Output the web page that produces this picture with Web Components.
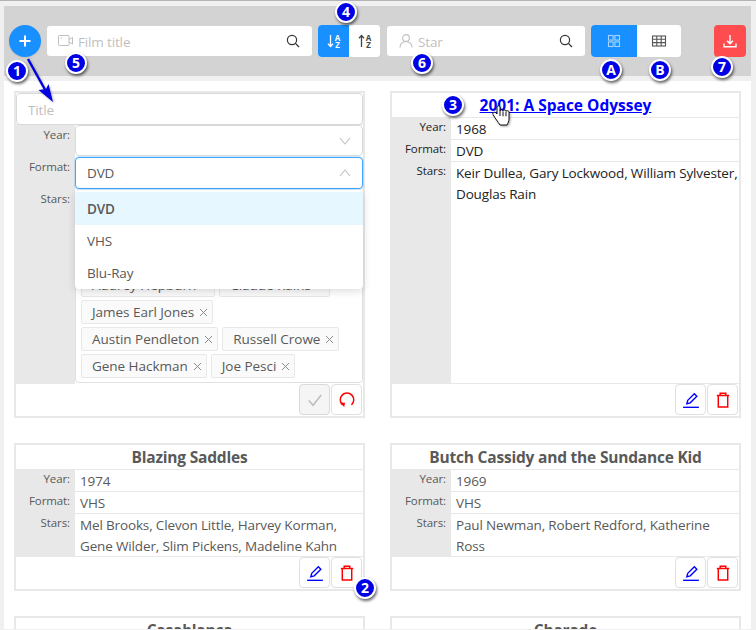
<!DOCTYPE html>
<html lang="en">
<head>
<meta charset="utf-8">
<title>Films</title>
<style>
html,body{margin:0;padding:0;height:630px;overflow:hidden;background:#f0f0f0;font:13.5px/21px "Open Sans","Noto Sans",sans-serif;letter-spacing:-.15px;color:#595959}
</style>
</head>
<body>
<film-app>
  <film-toolbar slot="toolbar">
    <round-add></round-add>
    <search-box style="width:265px" placeholder="Film title" icon="video"></search-box>
    <seg-group style="width:62px">
      <seg-btn active><sort-glyph dir="down"></sort-glyph></seg-btn>
      <seg-btn><sort-glyph dir="up"></sort-glyph></seg-btn>
    </seg-group>
    <search-box style="width:198px;margin-left:1px" placeholder="Star" icon="user"></search-box>
    <seg-group style="width:90px">
      <seg-btn active wide><ui-icon name="grid" style="color:#a5d4ff"></ui-icon></seg-btn>
      <seg-btn><ui-icon name="table" style="color:#555"></ui-icon></seg-btn>
    </seg-group>
    <export-btn></export-btn>
  </film-toolbar>

  <film-card>
    <text-field slot="title" placeholder="Title"></text-field>
    <card-row form label="Year:"><select-box></select-box></card-row>
    <card-row form label="Format:">
      <select-box open value="DVD">
        <menu-item selected>DVD</menu-item>
        <menu-item>VHS</menu-item>
        <menu-item>Blu-Ray</menu-item>
      </select-box>
    </card-row>
    <card-row form grow label="Stars:">
      <tag-box>
        <tag-line><tag-chip>Audrey Hepburn</tag-chip><tag-chip>Claude Rains</tag-chip></tag-line>
        <tag-line><tag-chip>James Earl Jones</tag-chip></tag-line>
        <tag-line><tag-chip>Austin Pendleton</tag-chip><tag-chip>Russell Crowe</tag-chip></tag-line>
        <tag-line><tag-chip>Gene Hackman</tag-chip><tag-chip>Joe Pesci</tag-chip></tag-line>
      </tag-box>
    </card-row>
    <action-btn slot="actions" disabled><ui-icon name="check" style="color:#bdbdbd"></ui-icon></action-btn>
    <action-btn slot="actions"><ui-icon name="undo" style="color:#f00"></ui-icon></action-btn>
  </film-card>

  <film-card active>
    <a slot="title" href="#">2001: A Space Odyssey</a>
    <card-row label="Year:">1968</card-row>
    <card-row label="Format:">DVD</card-row>
    <card-row grow label="Stars:">Keir Dullea, Gary Lockwood, William Sylvester, Douglas Rain</card-row>
    <action-btn slot="actions"><ui-icon name="edit" style="color:#00f"></ui-icon></action-btn>
    <action-btn slot="actions"><ui-icon name="trash" style="color:#f00"></ui-icon></action-btn>
  </film-card>

  <film-card>
    <span slot="title">Blazing Saddles</span>
    <card-row label="Year:">1974</card-row>
    <card-row label="Format:">VHS</card-row>
    <card-row grow label="Stars:">Mel Brooks, Clevon Little, Harvey Korman, Gene Wilder, Slim Pickens, Madeline Kahn</card-row>
    <action-btn slot="actions"><ui-icon name="edit" style="color:#00f"></ui-icon></action-btn>
    <action-btn slot="actions"><ui-icon name="trash" style="color:#f00"></ui-icon></action-btn>
  </film-card>

  <film-card>
    <span slot="title">Butch Cassidy and the Sundance Kid</span>
    <card-row label="Year:">1969</card-row>
    <card-row label="Format:">VHS</card-row>
    <card-row grow label="Stars:">Paul Newman, Robert Redford, Katherine Ross</card-row>
    <action-btn slot="actions"><ui-icon name="edit" style="color:#00f"></ui-icon></action-btn>
    <action-btn slot="actions"><ui-icon name="trash" style="color:#f00"></ui-icon></action-btn>
  </film-card>

  <film-card>
    <span slot="title">Casablanca</span>
  </film-card>
  <film-card>
    <span slot="title">Charade</span>
  </film-card>

  <call-out slot="overlay" x="17" y="69.500">1</call-out>
  <call-out slot="overlay" x="76" y="62">5</call-out>
  <call-out slot="overlay" x="346" y="11">4</call-out>
  <call-out slot="overlay" x="422" y="62">6</call-out>
  <call-out slot="overlay" x="611" y="69">A</call-out>
  <call-out slot="overlay" x="660" y="69">B</call-out>
  <call-out slot="overlay" x="722" y="66">7</call-out>
  <call-out slot="overlay" x="453" y="104">3</call-out>
  <call-out slot="overlay" x="365" y="587">2</call-out>
  <call-arrow slot="overlay"></call-arrow>
  <hand-cursor slot="overlay"></hand-cursor>
</film-app>

<script>
const ICONS = {
  plus:'<path d="M8 2.500v11M2.500 8h11" stroke="currentColor" stroke-width="2" fill="none"/>',
  search:'<circle cx="7" cy="7" r="4.600" fill="none" stroke="currentColor" stroke-width="1.200"/><path d="M10.400 10.400L14 14" stroke="currentColor" stroke-width="1.300" fill="none"/>',
  video:'<g fill="none" stroke="currentColor" stroke-width="1"><rect x=".5" y="2.500" width="10.500" height="10" rx=".8"/><path d="M11 6.500l3.500-2v6.500l-3.500-2"/><path d="M2.500 5h1.500"/></g>',
  user:'<g fill="none" stroke="currentColor" stroke-width="1.100"><circle cx="8" cy="5" r="3.400"/><path d="M2 14.500c0-3.400 2.600-6 6-6s6 2.600 6 6"/></g>',
  grid:'<g fill="none" stroke="currentColor" stroke-width="1.100"><rect x="2.500" y="2.500" width="4.600" height="4.600"/><rect x="8.900" y="2.500" width="4.600" height="4.600"/><rect x="2.500" y="8.900" width="4.600" height="4.600"/><rect x="8.900" y="8.900" width="4.600" height="4.600"/></g>',
  table:'<g fill="none" stroke="currentColor" stroke-width="1.100"><rect x="1.500" y="3" width="13" height="10"/><path d="M1.500 6.300h13M1.500 9.600h13M5.800 3v10M10.200 3v10"/></g>',
  download:'<g fill="none" stroke="#fff" stroke-width="1.400"><path d="M8 2v8.500M5 7.800l3 3 3-3" /><path d="M2 10.500v3.200h12v-3.200"/></g>',
  check:'<path d="M2.500 8.500l3.800 4.200 7.200-9.200" fill="none" stroke="currentColor" stroke-width="1.400"/>',
  undo:'<path d="M4 12.300A6 6 0 1 1 12 12.300" fill="none" stroke="currentColor" stroke-width="1.300"/><path d="M1.800 10.200l4.500.3-.8 3.800z" fill="currentColor"/>',
  edit:'<g fill="none" stroke="currentColor" stroke-width="1.200"><path d="M4.300 11.300l.8-3L11 2.400l2.200 2.200-5.900 5.900z"/><path d="M1 14.500h14" stroke-width="1.200"/></g>',
  trash:'<g fill="none" stroke="currentColor" stroke-width="1.300"><path d="M2.500 4h11"/><path d="M5.500 4V2h5V4"/><path d="M3.800 4v10.200h8.400V4"/></g>'
};
function def(name, css, html, extra){
  const t = document.createElement('template');
  t.innerHTML = '<style>'+css+'</style>'+html;
  customElements.define(name, class extends HTMLElement{
    constructor(){ super(); this.attachShadow({mode:'open'}).appendChild(t.content.cloneNode(true)); }
    connectedCallback(){ if(extra) extra.call(this, this.shadowRoot); }
  });
}
def('ui-icon', ':host{display:inline-flex;width:16px;height:16px}svg{width:100%;height:100%;display:block}', '', function(r){
  if(r.querySelector('svg')) return;
  const h = document.createElement('span');
  h.innerHTML = '<svg viewBox="0 0 16 16" aria-hidden="true">'+(ICONS[this.getAttribute('name')]||'')+'</svg>';
  r.appendChild(h.firstChild);
});
def('film-app', `:host{display:block;height:629px;border-top:1px solid #b4b4b4;padding:5px 5px 0 4px;box-sizing:border-box;position:relative;overflow:hidden}
  main{margin-top:5px;background:#fff;padding:10px 10px 0;display:grid;grid-template-columns:351px 351px;column-gap:25px;row-gap:25px;align-items:stretch;height:640px;align-content:start}`,
  '<slot name="toolbar"></slot><main><slot></slot></main><slot name="overlay"></slot>');
def('film-toolbar', ':host{display:flex;align-items:center;gap:6px;height:70px;background:#d3d3d3;padding:0 5px;box-sizing:border-box}', '<slot></slot>');
def('round-add', ':host{display:flex;width:32px;height:32px;border-radius:50%;background:#1890ff;color:#fff;align-items:center;justify-content:center;box-shadow:0 1px 2px rgba(0,0,0,.1)}', '<ui-icon name="plus"></ui-icon>');
def('search-box', `:host{display:flex;align-items:center;height:30px;background:#fff;border-radius:3px;box-sizing:border-box;padding:0 11px;color:#bfbfbf}
  .t{flex:1;margin-left:4px;padding-top:2px}.s{color:#333;margin-left:1px}`,
  '<ui-icon id="i"></ui-icon><span class="t"></span><ui-icon class="s" name="search"></ui-icon>', function(r){
    r.querySelector('.t').textContent = this.getAttribute('placeholder');
    const old = r.getElementById('i');
    if(old && !old.hasAttribute('name')){ const n=document.createElement('ui-icon'); n.setAttribute('name',this.getAttribute('icon')); n.id='i'; old.replaceWith(n); }
  });
def('seg-group', ':host{display:flex;height:32px;border-radius:4px;overflow:hidden;background:#fff}', '<slot></slot>');
def('seg-btn', `:host{flex:1;display:flex;align-items:center;justify-content:center;background:#fff;color:#444}
  :host([active]){background:#1890ff;color:#fff}:host([wide]){flex:0 0 46px}`, '<slot></slot>');
def('sort-glyph', `:host{display:flex;align-items:center;gap:1px}svg{width:7px;height:14px;display:block}
  .l{display:block;white-space:pre-line;text-align:center;font:bold 8px/7px "Open Sans",sans-serif;letter-spacing:0}`,
  '<svg viewBox="0 0 7 14"><path id="p" fill="none" stroke="currentColor" stroke-width="1.300"/></svg><span class="l">A\nZ</span>', function(r){
    r.getElementById('p').setAttribute('d', this.getAttribute('dir')==='down'?'M3.500 1v11.500M1 9.800l2.500 2.800L6 9.800':'M3.500 13V1.500M1 4.200l2.500-2.800L6 4.200');
  });
def('export-btn', ':host{display:flex;width:32px;height:32px;border-radius:4px;background:#ff4d4f;align-items:center;justify-content:center;margin-left:27px}', '<ui-icon name="download"></ui-icon>');
def('film-card', `:host{display:flex;flex-direction:column;border:2px solid #e8e8e8;box-sizing:border-box;background:#fff;min-width:0}
  :host([active]){color:#222}
  header{text-align:center;font-weight:700;font-size:15.5px;letter-spacing:-.2px;line-height:24px;min-height:24px;border-bottom:1px solid #e8e8e8}
  .rows{flex:1;display:flex;flex-direction:column}
  footer{display:flex;justify-content:flex-end;gap:1px;height:32px;padding-right:1px}
  ::slotted(a){color:#00f;text-decoration:underline;letter-spacing:0}`,
  '<header><slot name="title"></slot></header><div class="rows"><slot></slot></div><footer><slot name="actions"></slot></footer>');
def('card-row', `:host{display:grid;grid-template-columns:59px 1fr}
  :host([grow]){flex:1}
  .k{background:#e8e8e8;font-size:11.5px;letter-spacing:-.1px;line-height:18px;text-align:right;padding-right:5px;box-sizing:border-box}
  .v{padding:0 0 0 5px;border-bottom:1px solid #e8e8e8;min-width:0;line-height:21px}
  .t{padding-top:1px;margin-bottom:-1px}
  :host([form]) .v{padding:0;border-bottom:0;min-height:32px}
  :host([form]) .t{padding:0;margin:0}
  :host([form]) .k{line-height:20px}`,
  '<div class="k"></div><div class="v"><div class="t"><slot></slot></div></div>', function(r){ r.querySelector('.k').textContent=this.getAttribute('label'); });
def('text-field', `:host{display:block;height:32px;margin:0 0 -1px 0;border:1px solid #d9d9d9;border-radius:4px;box-sizing:border-box;background:#fff;color:#bfbfbf;font-weight:400;font-size:13.5px;letter-spacing:-.15px;line-height:32px;text-align:left;padding-left:11px}`,
  '<span></span>', function(r){ r.querySelector('span').textContent=this.getAttribute('placeholder'); });
def('select-box', `:host{display:block;position:relative;height:31px;border:1px solid #d9d9d9;border-radius:4px;box-sizing:border-box;background:#fff;margin-bottom:1px}
  :host([open]){border-color:#40a9ff;box-shadow:0 0 0 1px rgba(24,144,255,.2);height:32px;margin-bottom:0}
  .val{padding-left:11px;line-height:30px;display:block;height:30px}
  .ch{position:absolute;right:11px;top:10px;width:12px;height:10px;color:#bfbfbf}
  .menu{display:none;position:absolute;left:-1px;right:-1px;top:32px;background:#fff;border-radius:4px;box-shadow:0 2px 8px rgba(0,0,0,.15);padding:2px 0 0;z-index:5;overflow:hidden}
  :host([open]) .menu{display:block}`,
  '<span class="val"></span><svg class="ch" viewBox="0 0 12 10"><path id="c" fill="none" stroke="currentColor" stroke-width="1.100"/></svg><div class="menu"><slot></slot></div>', function(r){
    r.querySelector('.val').textContent=this.getAttribute('value')||'';
    r.getElementById('c').setAttribute('d', this.hasAttribute('open')?'M1 8l5-6 5 6':'M1 2l5 6 5-6');
  });
def('menu-item', `:host{display:block;height:32px;line-height:32px;padding-left:12px;color:#595959}
  :host([selected]){background:#e6f7ff;font-weight:600;height:33px;line-height:35px}`, '<slot></slot>');
def('tag-box', `:host{display:flex;flex-direction:column;justify-content:flex-end;height:193px;margin:1px 0;box-sizing:border-box;border:1px solid #e0e0e0;border-radius:4px;padding:0 0 4px 5px;gap:3px;background:#fff}`, '<slot></slot>');
def('tag-line', ':host{display:flex;gap:4px}', '<slot></slot>');
def('tag-chip', `:host{display:inline-flex;align-items:center;height:24px;box-sizing:border-box;background:#fafafa;border:1px solid #e8e8e8;border-radius:2px;padding:1px 4px 0 10px;white-space:nowrap;color:#595959;letter-spacing:-.03px}
  svg{width:9px;height:9px;margin-left:5px;color:#8c8c8c}`,
  '<slot></slot><svg viewBox="0 0 9 9"><path d="M1 1l7 7M8 1l-7 7" stroke="currentColor" stroke-width="1"/></svg>');
def('action-btn', `:host{display:flex;width:31px;height:31px;box-sizing:border-box;border:1px solid #e0e0e0;border-radius:4px;background:#fff;align-items:center;justify-content:center}
  :host([disabled]){background:#f5f5f5;border-color:#d9d9d9}
  ::slotted(ui-icon){width:18px;height:18px}`, '<slot></slot>');
def('call-out', `:host{position:absolute;width:22px;height:22px;border-radius:50%;background:#0000e6;border:2px solid #fff;box-sizing:border-box;box-shadow:1px 2px 3px rgba(0,0,0,.6);color:#fff;font:700 14px/18px "Open Sans",sans-serif;letter-spacing:0;text-align:center;z-index:9}`,
  '<slot></slot>', function(){ this.style.left=(+this.getAttribute('x')-11)+'px'; this.style.top=(+this.getAttribute('y')-11)+'px'; });
def('call-arrow', ':host{position:absolute;left:20px;top:52px;width:40px;height:56px;z-index:8}svg{display:block;overflow:visible;filter:drop-shadow(1px 1px 1px rgba(0,0,0,.3))}',
  '<svg width="40" height="56" viewBox="0 0 40 56"><path d="M8 6L28 42" stroke="#0000e0" stroke-width="2.400" fill="none"/><path d="M33 49L18.500 37 26 36 28.500 31z" fill="#0000e0"/></svg>');
def('hand-cursor', ':host{position:absolute;left:492px;top:104px;width:18px;height:21px;z-index:9}svg{display:block;overflow:visible;filter:drop-shadow(1px 1px 1px rgba(0,0,0,.35))}',
  '<svg width="18" height="21" viewBox="0 0 18 21"><path d="M5 2.200c0-2 3-2 3 0V6c0-1.500 3-1.500 3 0 0-1.300 3-1.300 3 .3 0-1 3-.8 3 .8V14c0 2-1 4-2 6H8C6 17 3 13 1 9.500 0 7 3 6 5 9z" fill="#fff" stroke="#111" stroke-width="1"/><path d="M8 6v5M11 6.300v5M14 6.800v4.500" stroke="#111" stroke-width="1" fill="none"/></svg>');
</script>
</body>
</html>
